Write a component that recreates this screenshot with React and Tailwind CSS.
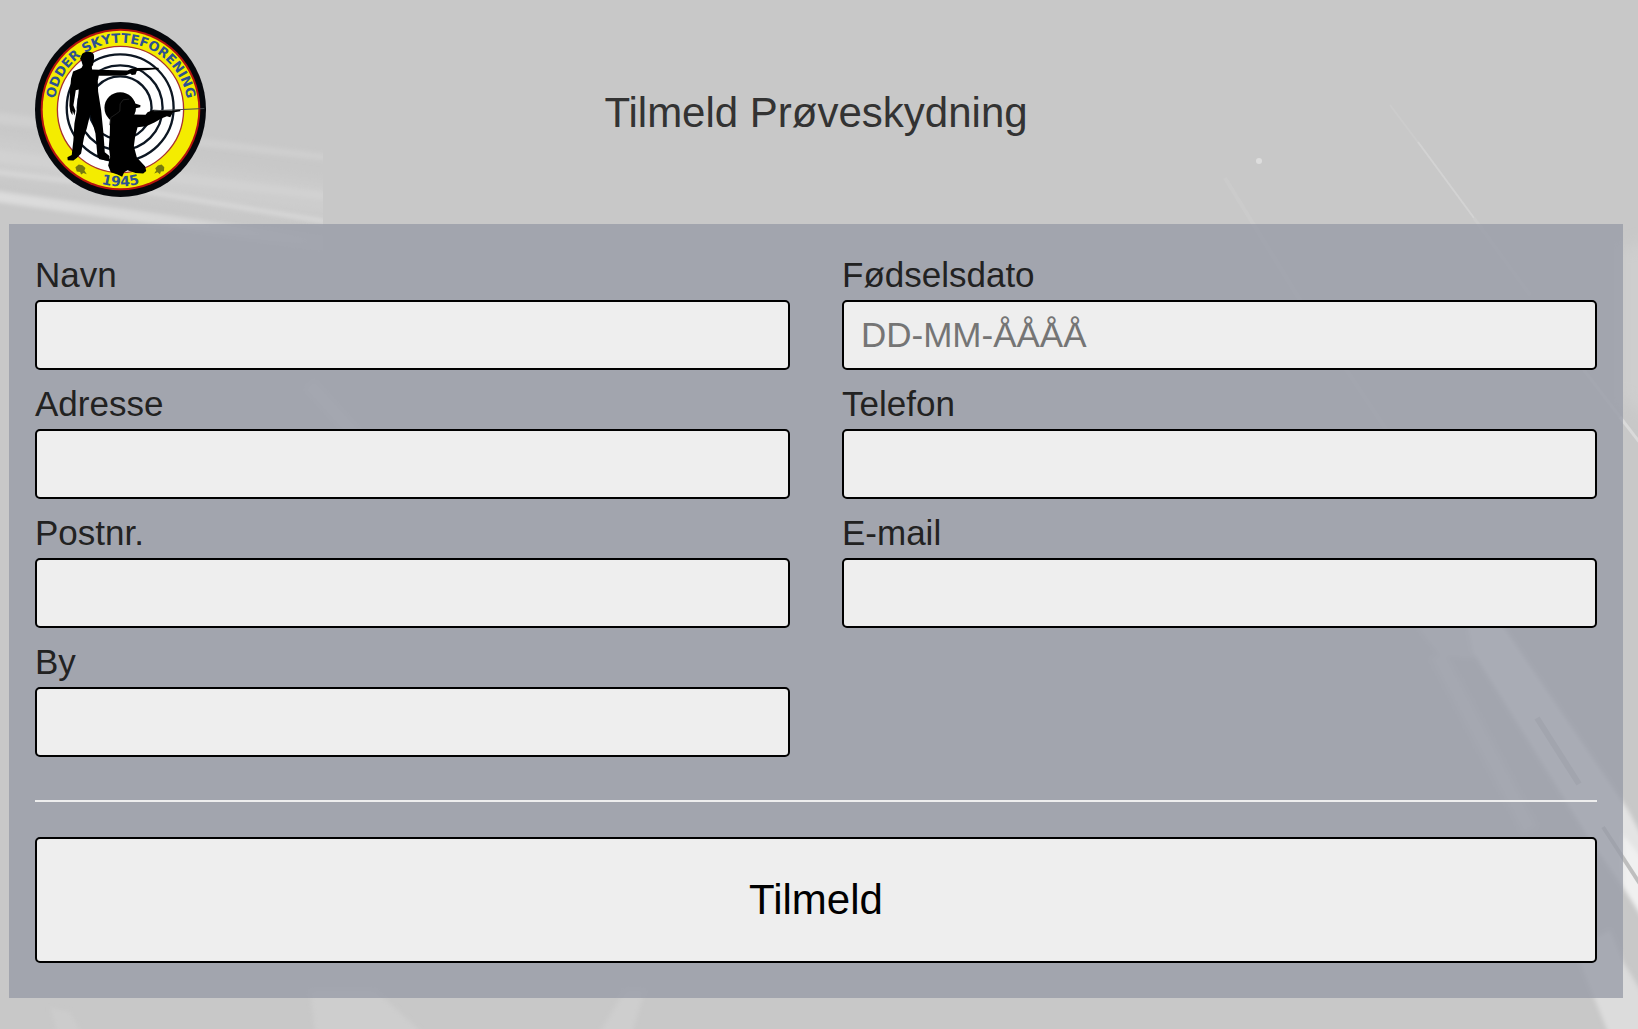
import React, { useState } from 'react';

const leftFields = [
  { id: 'navn', label: 'Navn', type: 'text' },
  { id: 'adresse', label: 'Adresse', type: 'text' },
  { id: 'postnr', label: 'Postnr.', type: 'text' },
  { id: 'by', label: 'By', type: 'text' },
];

const rightFields = [
  { id: 'foedselsdato', label: 'Fødselsdato', type: 'text', placeholder: 'DD-MM-ÅÅÅÅ' },
  { id: 'telefon', label: 'Telefon', type: 'tel' },
  { id: 'email', label: 'E-mail', type: 'email' },
];

const Backdrop = () => (
  <svg
    className="absolute inset-0 -z-10 h-full w-full"
    viewBox="0 0 1638 1029"
    preserveAspectRatio="xMidYMid slice"
    aria-hidden="true"
  >
    <defs>
      <filter id="soft" x="-20%" y="-20%" width="140%" height="140%">
        <feGaussianBlur stdDeviation="2" />
      </filter>
      <filter id="haze" x="-20%" y="-20%" width="140%" height="140%">
        <feGaussianBlur stdDeviation="7" />
      </filter>
      <linearGradient id="fade" gradientUnits="userSpaceOnUse" x1="0" y1="0" x2="323" y2="0">
        <stop offset="0" stopColor="#dcdcdc" />
        <stop offset="0.55" stopColor="#d7d7d7" />
        <stop offset="1" stopColor="#cbcbcb" />
      </linearGradient>
      <clipPath id="streakClip">
        <rect x="0" y="0" width="323" height="300" />
      </clipPath>
    </defs>
    <rect width="1638" height="1029" fill="#c8c8c8" />

    {/* Streaks on the left */}
    <g clipPath="url(#streakClip)">
      <path d="M-20 136 L340 186 L340 218 L-20 174Z" fill="#cdcdcd" filter="url(#haze)" />
      <path d="M-20 110 L340 156 L340 162 L-20 122Z" fill="#cfcfcf" filter="url(#soft)" />
      <path d="M-20 148 L340 194 L340 202 L-20 160Z" fill="#d1d1d1" filter="url(#soft)" />
      <path d="M-20 170 L120 187 L340 224" fill="none" stroke="#d9d9d9" strokeWidth="4" filter="url(#soft)" />
      <path d="M-20 194 L170 221 L340 246" fill="none" stroke="url(#fade)" strokeWidth="11" filter="url(#soft)" />
    </g>

    {/* Faint scratches */}
    <path d="M1390 105 L1420 145" fill="none" stroke="#cccccc" strokeWidth="2" />
    <path d="M1418 142 L1474 218" fill="none" stroke="#d3d3d3" strokeWidth="2" />
    <path d="M1474 218 L1530 295" fill="none" stroke="#cccccc" strokeWidth="3" />
    <path d="M1225 178 L1300 300 L1400 450" fill="none" stroke="#cbcbcb" strokeWidth="4" />
    <path d="M1580 365 L1620 417" fill="none" stroke="#cecece" strokeWidth="3" />
    <path d="M1620 417 L1640 443" fill="none" stroke="#dadada" strokeWidth="3" />
    <path d="M310 385 L360 440" stroke="#cfcfcf" strokeWidth="12" filter="url(#soft)" />
    <circle cx="1259" cy="161" r="3" fill="#dddddd" />
    <path d="M1620 250 L1650 240 L1650 420 L1620 395Z" fill="#cecece" filter="url(#haze)" />

    {/* Patches along the bottom edge */}
    <path d="M310 990 L375 990 L430 1040 L316 1040Z" fill="#cecece" filter="url(#soft)" />
    <path d="M625 990 L645 990 L630 1040 L595 1040Z" fill="#cecece" filter="url(#soft)" />
    <path d="M50 1008 L70 1012 L85 1040 L60 1040Z" fill="#cccccc" filter="url(#soft)" />

    {/* Rifle barrel on the right */}
    <g filter="url(#soft)">
      <path d="M1418 627 L1500 627 L1474 658 L1440 655Z" fill="#d4d4d4" />
      <path d="M1438 655 L1530 830" stroke="#d1d1d1" strokeWidth="16" fill="none" />
      <path d="M1465 610 L1492 610 L1628 810 L1660 870 L1660 945 L1623 887 L1590 840 L1473 652Z" fill="#e4e4e4" />
      <path d="M1623 835 L1660 880 L1660 945 L1623 887Z" fill="#f0f0f0" />
      <path d="M1575 950 L1610 930 L1623 962 L1650 1005 L1650 1045 L1613 1045Z" fill="#dcdcdc" />
    </g>
    <path d="M1537 718 L1579 784" stroke="#c6c6c6" strokeWidth="6" />
    <path d="M1603 827 L1640 884" stroke="#bebebe" strokeWidth="4" />
  </svg>
);

const Logo = () => (
  <svg
    className="h-[175px] w-[171px] shrink-0"
    viewBox="45 36 512 524"
    preserveAspectRatio="none"
    role="img"
    aria-label="Odder Skytteforening 1945"
  >
    <defs>
      <path id="topArc" d="M102 298 A200 200 0 0 1 502 298" />
      <path id="bottomArc" d="M74 298 A227 230 0 0 0 528 298" />
    </defs>
    <ellipse cx="301" cy="298" rx="256" ry="262" fill="#05070b" />
    <ellipse cx="301" cy="298" rx="239" ry="242" fill="#b4150f" />
    <ellipse cx="301" cy="298" rx="233" ry="236" fill="#f4ec00" />
    <circle cx="301" cy="298" r="189" fill="#ffffff" stroke="#a83232" strokeWidth="4" />

    {/* Target rings */}
    <g fill="none" stroke="#0c1622" strokeWidth="7">
      <circle cx="300" cy="293" r="160" />
      <circle cx="300" cy="293" r="127" />
      <circle cx="300" cy="293" r="94" />
    </g>
    <circle cx="300" cy="293" r="47" fill="#000000" />

    <g fill="#2c5192" fontFamily="'DejaVu Sans', sans-serif" fontWeight="700">
      <text fontSize="39" textAnchor="middle">
        <textPath href="#topArc" startOffset="50%">ODDER SKYTTEFORENING</textPath>
      </text>
      <text fontSize="42" textAnchor="middle">
        <textPath href="#bottomArc" startOffset="50%">1945</textPath>
      </text>
    </g>

    {/* Oak leaves */}
    <g fill="#77790f">
      <path d="M166 471 L176 463 L187 465 L196 473 L193 481 L200 492 L190 488 L183 493 L180 485 L170 484Z" />
      <path d="M432 471 L424 463 L413 466 L405 474 L408 481 L402 490 L412 486 L419 492 L422 484 L431 483Z" />
    </g>

    {/* Standing shooter */}
    <path
      d="M184 136 Q188 125 204 125 Q222 125 222 140 L221 153 Q220 166 215 170 L216 178
         L262 180 L322 181 L334 176 L346 174 L414 173 L416 177 L350 183 L346 193 L335 195 L330 190
         L316 196 L262 197 L236 197 L233 212 L234 244 L243 300 L250 370 L254 426
         L268 437 L268 452 L238 447 L232 438 L226 370 L210 314 L200 355 L192 380 L183 430
         L170 443 L160 451 L143 450 L142 441 L155 434 L160 390 L163 340 L172 290 L176 238
         L167 240 L160 285 L166 302 L163 316 L158 302 L157 315 L151 305 L148 287 L150 240
         L153 205 L159 184 L184 174 L188 166 L184 153 L180 146Z"
      fill="#000000"
    />

    {/* Kneeling shooter */}
    <path
      d="M300 280 Q306 266 322 265 Q341 266 345 280 L361 285 L360 291 L346 294 L345 305 L338 313
         L376 314 L382 306 L400 299 L455 301 L480 298 L480 303 L458 307 L450 321 L440 318 L423 325
         L404 336 L378 348 L352 351 L345 378 L341 408 L350 442 L375 469 L378 482 L369 490
         L346 488 L322 480 L312 486 L306 499 L292 493 L272 486 L264 466 L270 440 L266 410
         L269 370 L270 326 L285 312 L302 305Z"
      fill="#000000"
    />
    <path
      d="M268 345 L272 322 L290 310 L299 303 L300 281 L309 269 L327 267"
      fill="none"
      stroke="#2d2d2d"
      strokeWidth="2"
    />
    <path d="M400 302 L552 295" stroke="#45484a" strokeWidth="3" />
  </svg>
);

const Field = ({ field, value, onChange }) => (
  <div className="flex flex-col">
    <label htmlFor={field.id} className="mb-[5px] text-[35px] leading-[40px] text-[#222]">
      {field.label}
    </label>
    <input
      id={field.id}
      name={field.id}
      type={field.type}
      placeholder={field.placeholder}
      value={value}
      onChange={onChange}
      className="h-[70px] w-full rounded-[5px] border-2 border-black bg-[#eee] px-[17px] text-[35px] text-black placeholder:text-[#757575]"
    />
  </div>
);

const App = () => {
  const [formData, setFormData] = useState({});

  const handleChange = (event) => {
    const { name, value } = event.target;
    setFormData(prev => ({ ...prev, [name]: value }));
  };

  const handleSubmit = (event) => {
    event.preventDefault();
  };

  const renderFields = (fields) => fields.map((field) => (
    <Field
      key={field.id}
      field={field}
      value={formData[field.id] || ''}
      onChange={handleChange}
    />
  ));

  return (
    <div className="relative isolate min-h-screen overflow-hidden pr-[15px] pl-[9px] font-['Liberation_Sans',Arial,sans-serif]">
      <Backdrop />

      <header className="grid grid-cols-[1fr_auto_1fr] items-center px-[26px] pt-[22px] pb-[20px]">
        <div className="mb-[7px]">
          <Logo />
        </div>
        <h1 className="text-[42px] leading-[48px] text-[#333]">Tilmeld Prøveskydning</h1>
      </header>

      <form onSubmit={handleSubmit} className="bg-[#959aa6]/75 px-[26px] pt-[31px] pb-[35px]">
        <div className="grid grid-cols-2 gap-x-[52px]">
          <div className="flex flex-col gap-[14px]">{renderFields(leftFields)}</div>
          <div className="flex flex-col gap-[14px]">{renderFields(rightFields)}</div>
        </div>

        <hr className="mt-[43px] mb-[35px] border-t-2 border-[#eee]" />

        <button
          type="submit"
          className="h-[126px] w-full rounded-[5px] border-2 border-black bg-[#eee] pb-[2px] text-[42px] text-black"
        >
          Tilmeld
        </button>
      </form>
    </div>
  );
};

export default App;
